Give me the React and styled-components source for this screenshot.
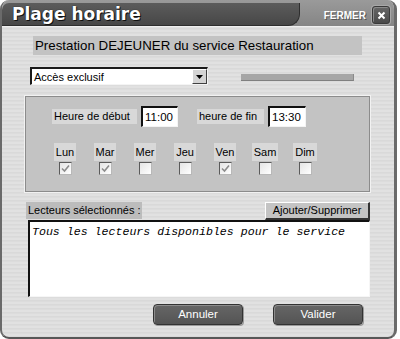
import React from "react";
import styled, { createGlobalStyle } from "styled-components";

const Global = createGlobalStyle`
  html, body { margin: 0; padding: 0; background: #ffffff; }
  * { box-sizing: border-box; }
`;

const Window = styled.div`
  width: 397px;
  height: 339px;
  border-left: 2px solid #6a6a6a;
  border-right: 3px solid #6a6a6a;
  border-bottom: 2px solid #585858;
  border-radius: 9px;
  overflow: hidden;
  display: flex;
  flex-direction: column;
  background: repeating-linear-gradient(0deg, #d9d9d9 0 1px, #e1e1e1 1px 3px, #dcdcdc 3px 4px);
  font-family: "Liberation Sans", Arial, sans-serif;
  color: #000;
`;

const TitleBar = styled.div`
  height: 27px;
  flex: none;
  display: flex;
  align-items: flex-start;
  background: linear-gradient(180deg, #9a9a9a, #858585);
  border-bottom: 1px solid #efefef;
`;

const TitleTab = styled.div`
  margin-top: 3px;
  width: 298px;
  height: 23px;
  background: linear-gradient(180deg, #5c5c5c, #474747);
  border-radius: 7px 0 12px 0;
  border-right: 1px solid #2e2e2e;
  border-bottom: 1px solid #2e2e2e;
  padding-left: 10px;
  display: flex;
  align-items: center;
`;

const Title = styled.span`
  font-family: "DejaVu Sans", Verdana, sans-serif;
  font-weight: bold;
  font-size: 17px;
  color: #fff;
  text-shadow: 1px 1px 0 #111, 0 0 1px #000;
`;

const CloseArea = styled.div`
  flex: 1;
  display: flex;
  align-items: center;
  justify-content: flex-end;
  gap: 6px;
  padding: 5px 4px 0 0;
  height: 25px;
`;

const CloseLabel = styled.span`
  font-family: "Liberation Sans", Arial, sans-serif;
  font-weight: bold;
  font-size: 10px;
  color: #fff;
  text-shadow: 1px 1px 0 #555;
`;

const CloseButton = styled.div`
  width: 18px;
  height: 18px;
  border-radius: 3px;
  background: linear-gradient(180deg, #666, #4a4a4a);
  border: 1px solid #3a3a3a;
  box-shadow: inset 1px 1px 0 #8a8a8a, 0 0 0 1px #a8a8a8;
  display: flex;
  align-items: center;
  justify-content: center;
`;

const Body = styled.div`
  flex: 1;
  display: flex;
  flex-direction: column;
  align-items: flex-start;
`;

const Header = styled.div`
  margin: 9px 0 0 31px;
  width: 329px;
  height: 19px;
  background: #c3c3c3;
  font-size: 13.3px;
  line-height: 19px;
  padding-left: 2px;
  white-space: nowrap;
`;

const ControlsRow = styled.div`
  margin: 12px 0 0 28px;
  display: flex;
  align-items: center;
  gap: 33px;
`;

const Select = styled.div`
  width: 178px;
  height: 18px;
  background: #fff;
  border-top: 2px solid #1a1a1a;
  border-left: 2px solid #1a1a1a;
  border-right: 1px solid #f4f4f4;
  border-bottom: 1px solid #f4f4f4;
  display: flex;
  align-items: center;
  font-size: 11px;
`;

const SelectText = styled.span`
  flex: 1;
  padding-left: 2px;
`;

const SelectArrow = styled.div`
  width: 15px;
  height: 15px;
  background: #d4d4d4;
  border-top: 1px solid #fff;
  border-left: 1px solid #fff;
  border-right: 1px solid #404040;
  border-bottom: 1px solid #404040;
  display: flex;
  align-items: center;
  justify-content: center;
`;

const Bar = styled.div`
  width: 113px;
  height: 7px;
  background: #a6a6a6;
  border-bottom: 1px solid #808080;
  border-right: 1px solid #8a8a8a;
  margin-top: 2px;
`;

const Group = styled.div`
  margin: 11px 0 0 23px;
  width: 345px;
  height: 96px;
  background: #c3c3c3;
  border: 1px solid #8c8c8c;
  box-shadow: 0 0 0 1px #f2f2f2;
  padding: 9px 0 0 26px;
`;

const TimeRow = styled.div`
  display: flex;
  align-items: center;
`;

const FieldLabel = styled.div`
  width: ${(p) => p.$w}px;
  height: 15px;
  background: #d8d8d8;
  font-size: 11px;
  line-height: 15px;
  padding-left: 2px;
  margin-left: ${(p) => p.$ml || 0}px;
  white-space: nowrap;
`;

const TimeInput = styled.div`
  margin-left: 4px;
  width: ${(p) => p.$w}px;
  height: 21px;
  background: #fff;
  border-top: 2px solid #111;
  border-left: 2px solid #111;
  border-right: 1px solid #f4f4f4;
  border-bottom: 1px solid #f4f4f4;
  font-size: 11.5px;
  line-height: 18px;
  padding-left: 2px;
`;

const DaysRow = styled.div`
  margin-top: 16px;
  display: flex;
  gap: 14px;
`;

const DayCol = styled.div`
  width: 26px;
  display: flex;
  flex-direction: column;
  align-items: center;
  gap: 1px;
`;

const DayLabel = styled.div`
  height: 18px;
  padding: 0 2px;
  min-width: 21px;
  background: #d8d8d8;
  font-size: 11px;
  line-height: 18px;
  text-align: center;
`;

const CheckBox = styled.div`
  width: 13px;
  height: 13px;
  border: 1px solid;
  border-color: #5a5a5a #b8b8b8 #b8b8b8 #5a5a5a;
  background: linear-gradient(135deg, #e4e4e4, #ffffff);
  display: flex;
  align-items: center;
  justify-content: center;
`;

const LecteursRow = styled.div`
  margin: 10px 0 0 24px;
  width: 344px;
  display: flex;
  justify-content: space-between;
  align-items: flex-start;
`;

const LecteursLabel = styled.div`
  width: 116px;
  height: 17px;
  background: #bcbcbc;
  font-size: 11px;
  line-height: 17px;
  padding-left: 2px;
  white-space: nowrap;
`;

const SmallButton = styled.div`
  width: 105px;
  height: 18px;
  background: #c4c4c4;
  border-top: 1px solid #fff;
  border-left: 1px solid #fff;
  border-right: 2px solid #333;
  border-bottom: 2px solid #333;
  font-size: 11px;
  line-height: 15px;
  text-align: center;
`;

const ListBox = styled.div`
  margin-left: 26px;
  width: 342px;
  height: 77px;
  background: #fff;
  border-top: 2px solid #111;
  border-left: 2px solid #111;
  border-right: 1px solid #f6f6f6;
  border-bottom: 1px solid #f6f6f6;
  padding: 3px 0 0 2px;
  font-family: "Liberation Mono", "Courier New", monospace;
  font-style: italic;
  font-size: 11.6px;
  line-height: 14px;
  white-space: nowrap;
`;

const ButtonsRow = styled.div`
  margin: 7px 0 0 151px;
  display: flex;
  gap: 30px;
`;

const DarkButton = styled.div`
  width: 90px;
  height: 21px;
  border-radius: 4px;
  background: linear-gradient(180deg, #666, #545454);
  border: 1px solid #333;
  box-shadow: inset 1px 1px 0 #8c8c8c, 1px 1px 0 #9a9a9a;
  color: #fff;
  font-size: 11.5px;
  line-height: 19px;
  text-align: center;
`;

const Check = ({ checked }) => (
  <CheckBox>
    {checked && (
      <svg width="9" height="9" viewBox="0 0 9 9">
        <path d="M1 4.5 L3.5 7 L8 1.5" fill="none" stroke="#8c8c8c" strokeWidth="1.6" />
      </svg>
    )}
  </CheckBox>
);

const days = [
  ["Lun", true],
  ["Mar", true],
  ["Mer", false],
  ["Jeu", false],
  ["Ven", true],
  ["Sam", false],
  ["Dim", false],
];

export default function App() {
  return (
    <>
      <Global />
      <Window>
        <TitleBar>
          <TitleTab>
            <Title>Plage horaire</Title>
          </TitleTab>
          <CloseArea>
            <CloseLabel>FERMER</CloseLabel>
            <CloseButton>
              <svg width="9" height="9" viewBox="0 0 9 9">
                <path d="M1.5 1.5 L7.5 7.5 M7.5 1.5 L1.5 7.5" stroke="#fff" strokeWidth="2" />
              </svg>
            </CloseButton>
          </CloseArea>
        </TitleBar>
        <Body>
          <Header>Prestation DEJEUNER du service Restauration</Header>
          <ControlsRow>
            <Select>
              <SelectText>Accès exclusif</SelectText>
              <SelectArrow>
                <svg width="7" height="4" viewBox="0 0 7 4">
                  <path d="M0 0 L7 0 L3.5 4 Z" fill="#000" />
                </svg>
              </SelectArrow>
            </Select>
            <Bar />
          </ControlsRow>
          <Group>
            <TimeRow>
              <FieldLabel $w={85}>Heure de début</FieldLabel>
              <TimeInput $w={37}>11:00</TimeInput>
              <FieldLabel $w={67} $ml={19}>heure de fin</FieldLabel>
              <TimeInput $w={38}>13:30</TimeInput>
            </TimeRow>
            <DaysRow>
              {days.map(([d, c]) => (
                <DayCol key={d}>
                  <DayLabel>{d}</DayLabel>
                  <Check checked={c} />
                </DayCol>
              ))}
            </DaysRow>
          </Group>
          <LecteursRow>
            <LecteursLabel>Lecteurs sélectionnés :</LecteursLabel>
            <SmallButton>Ajouter/Supprimer</SmallButton>
          </LecteursRow>
          <ListBox>Tous les lecteurs disponibles pour le service</ListBox>
          <ButtonsRow>
            <DarkButton>Annuler</DarkButton>
            <DarkButton>Valider</DarkButton>
          </ButtonsRow>
        </Body>
      </Window>
    </>
  );
}
